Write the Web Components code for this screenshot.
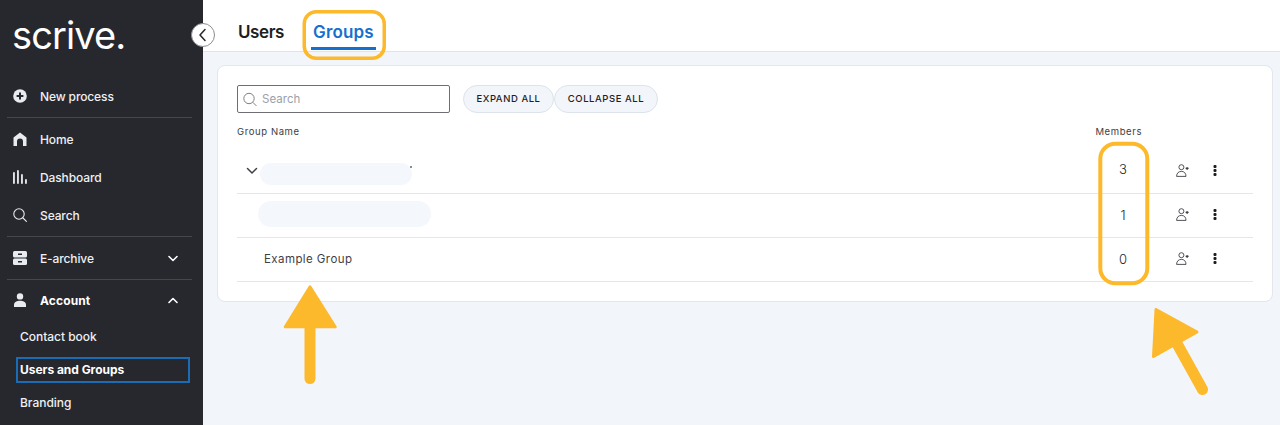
<!DOCTYPE html>
<html lang="en">
<head>
<meta charset="utf-8">
<title>Users and Groups</title>
<style>
    html, body { margin: 0; padding: 0; height: 425px; overflow: hidden; }
    body { font-family: "Inter", "Liberation Sans", sans-serif; }
</style>
</head>
<body>
<app-shell></app-shell>

<template id="app-shell-template">
    <style>
        :host { display: flex; position: relative; width: 1280px; height: 425px; overflow: hidden; background: #f2f5f9; }
        .main { flex: 1; display: flex; flex-direction: column; min-width: 0; }
        .content { padding: 13px 7px 0 14px; }
        .collapse {
            position: absolute; left: 191px; top: 23px; width: 24px; height: 24px; box-sizing: border-box;
            border-radius: 50%; background: #fff; border: 1px solid #8a8d92;
            display: flex; align-items: center; justify-content: center;
        }
    </style>
    <side-bar></side-bar>
    <div class="main">
        <tab-bar></tab-bar>
        <div class="content"><groups-card></groups-card></div>
    </div>
    <div class="collapse">
        <svg width="12" height="14" viewBox="0 0 12 14" fill="none" stroke="#26272c" stroke-width="1.5" stroke-linecap="round" stroke-linejoin="round"><path d="M8 1.5 3 7l5 5.5"/></svg>
    </div>
    <call-outs></call-outs>
</template>

<template id="side-bar-template">
    <style>
        :host { display: block; width: 203px; flex: none; height: 425px; background: #27282e; color: #f3f4f6; box-sizing: border-box; overflow: hidden; }
        .logo { height: 75px; box-sizing: border-box; padding: 10px 0 0 12px; font-size: 38px; font-weight: 400; line-height: 50px; letter-spacing: -0.9px; color: #fff; }
        .rule { height: 1px; background: #46474d; margin: 0 11px 0 7px; }
        .gap2 { height: 2px; }
        svg { display: block; }
    </style>
    <div class="logo">scrive.</div>
    <nav-item label="New process" tall>
        <svg slot="icon" width="14" height="14" viewBox="0 0 14 14"><circle cx="7" cy="7" r="6.8" fill="#e8ebf0"/><path d="M7 3.6v6.8M3.6 7h6.8" stroke="#27282e" stroke-width="2"/></svg>
    </nav-item>
    <div class="rule"></div>
    <div class="gap2"></div>
    <nav-item label="Home">
        <svg slot="icon" width="14" height="14" viewBox="0 0 14 14"><path d="M0.5 14V5.4L7 0.6l6.5 4.8V14H10V9.6a3 3 0 0 0-6 0V14z" fill="#e8ebf0"/></svg>
    </nav-item>
    <nav-item label="Dashboard">
        <svg slot="icon" width="14" height="14" viewBox="0 0 14 14" fill="#dfe2e8"><rect x="0" y="2" width="1.9" height="12" rx="0.9"/><rect x="4" y="0" width="1.9" height="14" rx="0.9"/><rect x="8" y="4" width="1.9" height="10" rx="0.9"/><rect x="12" y="9" width="1.9" height="5" rx="0.9"/></svg>
    </nav-item>
    <nav-item label="Search">
        <svg slot="icon" width="14" height="14" viewBox="0 0 14 14" fill="none" stroke="#e8ebf0" stroke-width="1.1"><circle cx="6" cy="6" r="5.2"/><path d="M10 10l3.4 3.4" stroke-linecap="round"/></svg>
    </nav-item>
    <div class="gap2"></div>
    <div class="rule"></div>
    <nav-item label="E-archive" tall chevron="down">
        <svg slot="icon" width="14" height="14" viewBox="0 0 14 14"><rect x="0" y="0" width="14" height="6.4" rx="1.5" fill="#e8ebf0"/><rect x="0" y="7.6" width="14" height="6.4" rx="1.5" fill="#e8ebf0"/><path d="M5 3.2h4M5 10.8h4" stroke="#27282e" stroke-width="1.4"/></svg>
    </nav-item>
    <div class="rule"></div>
    <nav-item label="Account" strong chevron="up">
        <svg slot="icon" width="14" height="14" viewBox="0 0 14 14" fill="#e8ebf0"><circle cx="7" cy="3.4" r="3.2"/><path d="M1 14v-2.2C1 9.2 4 7.8 7 7.8s6 1.4 6 4V14z"/></svg>
    </nav-item>
    <sub-item label="Contact book"></sub-item>
    <sub-item label="Users and Groups" active></sub-item>
    <sub-item label="Branding"></sub-item>
</template>

<template id="nav-item-template">
    <style>
        :host { display: flex; align-items: center; height: 38px; padding: 0 25px 0 13px; font-size: 12px; letter-spacing: -0.12px; font-weight: 500; color: #eef0f3; }
        :host([tall]) { height: 42px; }
        :host([strong]) { height: 40px; font-weight: 700; color: #fff; letter-spacing: 0.12px; }
        .icon { width: 27px; flex: none; }
        .label { flex: 1; }
        svg { display: block; }
    </style>
    <span class="icon"><slot name="icon"></slot></span>
    <span class="label"></span>
    <svg class="chev" width="10" height="7" viewBox="0 0 10 7" fill="none" stroke="#fff" stroke-width="1.6" stroke-linecap="round" stroke-linejoin="round" hidden><path d="M1 1.5l4 4 4-4"/></svg>
</template>

<template id="sub-item-template">
    <style>
        :host { display: flex; align-items: center; height: 33px; padding-left: 16px; padding-right: 13px; font-size: 12px; font-weight: 500; letter-spacing: -0.03px; color: #eef0f3; }
        .box { flex: 1; height: 26px; box-sizing: border-box; display: flex; align-items: center; padding-left: 2px; border: 2px solid transparent; white-space: nowrap; }
        :host([active]) { font-weight: 700; color: #fff; }
        :host([active]) .box { border-color: #1c6bb5; }
    </style>
    <div class="box"></div>
</template>

<template id="tab-bar-template">
    <style>
        :host { display: flex; height: 52px; box-sizing: border-box; background: #fff; border-bottom: 1px solid #dfe4ec; padding-left: 35px; font-size: 17px; font-weight: 600; }
        .tab { height: 51px; box-sizing: border-box; padding-top: 21px; line-height: 23px; position: relative; color: #1d1e22; letter-spacing: -0.4px; margin-right: 29px; }
        .tab.on { color: #1570cd; letter-spacing: 0.15px; margin-right: 0; }
        .tab.on::after { content: ""; position: absolute; left: -2px; right: -2px; top: 47px; height: 3px; background: #1570cd; }
    </style>
    <div class="tab">Users</div>
    <div class="tab on">Groups</div>
</template>

<template id="groups-card-template">
    <style>
        :host { display: block; height: 237px; box-sizing: border-box; background: #fff; border: 1px solid #e2e6ed; border-radius: 8px; padding: 19px 19px 0 19px; color: #33343a; }
        .tools { display: flex; align-items: center; height: 28px; }
        .search { width: 213px; height: 28px; box-sizing: border-box; border: 1px solid #6d6f74; border-radius: 2px; display: flex; align-items: center; gap: 5px; padding-left: 5px; margin-right: 13px; font-size: 11.5px; letter-spacing: 0.05px; color: #9aa1ab; }
        .btn { height: 28px; box-sizing: border-box; border: 1px solid #dde3eb; border-radius: 14px; background: #f2f5f9; display: flex; align-items: center; justify-content: center; padding-bottom: 1px; font-size: 9.5px; font-weight: 500; letter-spacing: 0.55px; color: #1f2024; }
        .btn.a { width: 91px; }
        .btn.b { width: 104px; }
        .head { display: flex; justify-content: space-between; height: 37px; align-items: center; box-sizing: border-box; font-size: 9.5px; color: #3c3d42; letter-spacing: 0.6px; padding-right: 111px; }
        svg { display: block; }
    </style>
    <div class="tools">
        <div class="search">
            <svg width="14" height="15" viewBox="0 0 14 15" fill="none" stroke="#7d8086" stroke-width="1"><circle cx="6" cy="6.5" r="5.2"/><path d="M10 10.5l3.2 3.2" stroke-linecap="round"/></svg>
            <span>Search</span>
        </div>
        <div class="btn a">EXPAND ALL</div>
        <div class="btn b">COLLAPSE ALL</div>
    </div>
    <div class="head"><span>Group Name</span><span>Members</span></div>
    <group-row members="3" blur="152" blur-height="22" expand></group-row>
    <group-row members="1" blur="173" blur-height="26" indent></group-row>
    <group-row members="0" name="Example Group"></group-row>
</template>

<template id="group-row-template">
    <style>
        :host { display: flex; align-items: center; height: 44px; box-sizing: border-box; padding-bottom: 2px; border-bottom: 1px solid #e2e6ed; font-size: 11.5px; letter-spacing: 0.42px; color: #3f4046; }
        .name { flex: 1; display: flex; align-items: center; padding-left: 27px; min-width: 0; }
        :host([expand]) .name { padding-left: 9px; gap: 2px; }
        :host([indent]) .name { padding-left: 21px; }
        .pill { background: #f4f7fb; border-radius: 13px; position: relative; }
        :host([expand]) .pill { margin-top: 7px; }
        :host([indent]) .pill { margin-bottom: 2px; }
        :host([expand]) .pill::after { content: ""; position: absolute; left: 150px; top: 3px; width: 2px; height: 2px; background: #8b8d92; }
        .count { width: 30px; text-align: center; font-size: 13px; font-weight: 300; letter-spacing: 0; color: #26272b; margin-right: 37.5px; }
        :host([expand]) .count { margin-bottom: 3px; }
        .add { width: 37.5px; flex: none; }
        .more { width: 40px; flex: none; }
        svg { display: block; }
    </style>
    <div class="name"></div>
    <div class="count"></div>
    <div class="add">
        <svg width="13" height="13" viewBox="0 0 13 13" fill="none" stroke="#3f4046" stroke-width="0.9"><circle cx="5.4" cy="3.2" r="2.5"/><path d="M.6 12.4c0-3.2 2-5 4.8-5s4.6 1.8 4.6 5z"/><path d="M9.6 4.4h3M11.1 2.9v3" stroke-width="1.1"/></svg>
    </div>
    <div class="more">
        <svg width="4" height="11" viewBox="0 0 4 11" fill="#1d1e22"><rect x="0.5" y="0" width="3" height="3" rx="1"/><rect x="0.5" y="4" width="3" height="3" rx="1"/><rect x="0.5" y="8" width="3" height="3" rx="1"/></svg>
    </div>
</template>

<template id="call-outs-template">
    <style>
        :host { display: block; position: absolute; inset: 0; pointer-events: none; }
        svg { display: block; }
    </style>
    <svg width="1280" height="425" viewBox="0 0 1280 425" fill="none">
        <rect x="304.25" y="11.75" width="80" height="46.5" rx="12" stroke="#fdb92c" stroke-width="3.5"/>
        <rect x="1100.3" y="143.7" width="47" height="139.6" rx="15" stroke="#fdb92c" stroke-width="4"/>
        <g fill="#fdb92c" stroke="#fdb92c" stroke-linejoin="round" stroke-linecap="round">
            <path d="M310 286.5 335.5 327H285z" stroke-width="2.5"/>
            <path d="M310 325V378.5" stroke-width="11"/>
            <path d="M1156 309.5 1197 332 1153.5 356.5z" stroke-width="3"/>
            <path d="M1175 340 1202.5 389.5" stroke-width="11"/>
        </g>
    </svg>
</template>

<script>
function makeEl(tag, id, setup) {
    customElements.define(tag, class extends HTMLElement {
        constructor() {
            super();
            this.attachShadow({ mode: 'open' });
            this.shadowRoot.appendChild(document.getElementById(id).content.cloneNode(true));
        }
        connectedCallback() {
            if (setup) setup(this, this.shadowRoot);
        }
    });
}

makeEl('nav-item', 'nav-item-template', (el, root) => {
    root.querySelector('.label').textContent = el.getAttribute('label');
    const chev = root.querySelector('.chev');
    const dir = el.getAttribute('chevron');
    if (dir) {
        chev.removeAttribute('hidden');
        if (dir === 'up') chev.style.transform = 'rotate(180deg)';
    } else {
        chev.style.display = 'none';
    }
});

makeEl('sub-item', 'sub-item-template', (el, root) => {
    root.querySelector('.box').textContent = el.getAttribute('label');
});

makeEl('group-row', 'group-row-template', (el, root) => {
    const name = root.querySelector('.name');
    root.querySelector('.count').textContent = el.getAttribute('members');
    if (el.hasAttribute('expand')) {
        const ns = 'http://www.w3.org/2000/svg';
        const svg = document.createElementNS(ns, 'svg');
        svg.setAttribute('width', '12');
        svg.setAttribute('height', '8');
        svg.setAttribute('viewBox', '0 0 12 8');
        svg.innerHTML = '<path d="M1.5 1.5 6 6l4.5-4.5" fill="none" stroke="#3f4046" stroke-width="1.5" stroke-linecap="round" stroke-linejoin="round"/>';
        name.appendChild(svg);
    }
    if (el.hasAttribute('blur')) {
        const pill = document.createElement('div');
        pill.className = 'pill';
        pill.style.width = el.getAttribute('blur') + 'px';
        pill.style.height = el.getAttribute('blur-height') + 'px';
        name.appendChild(pill);
    } else {
        name.textContent = el.getAttribute('name');
    }
});

makeEl('side-bar', 'side-bar-template');
makeEl('tab-bar', 'tab-bar-template');
makeEl('groups-card', 'groups-card-template');
makeEl('call-outs', 'call-outs-template');
makeEl('app-shell', 'app-shell-template');
</script>
</body>
</html>
